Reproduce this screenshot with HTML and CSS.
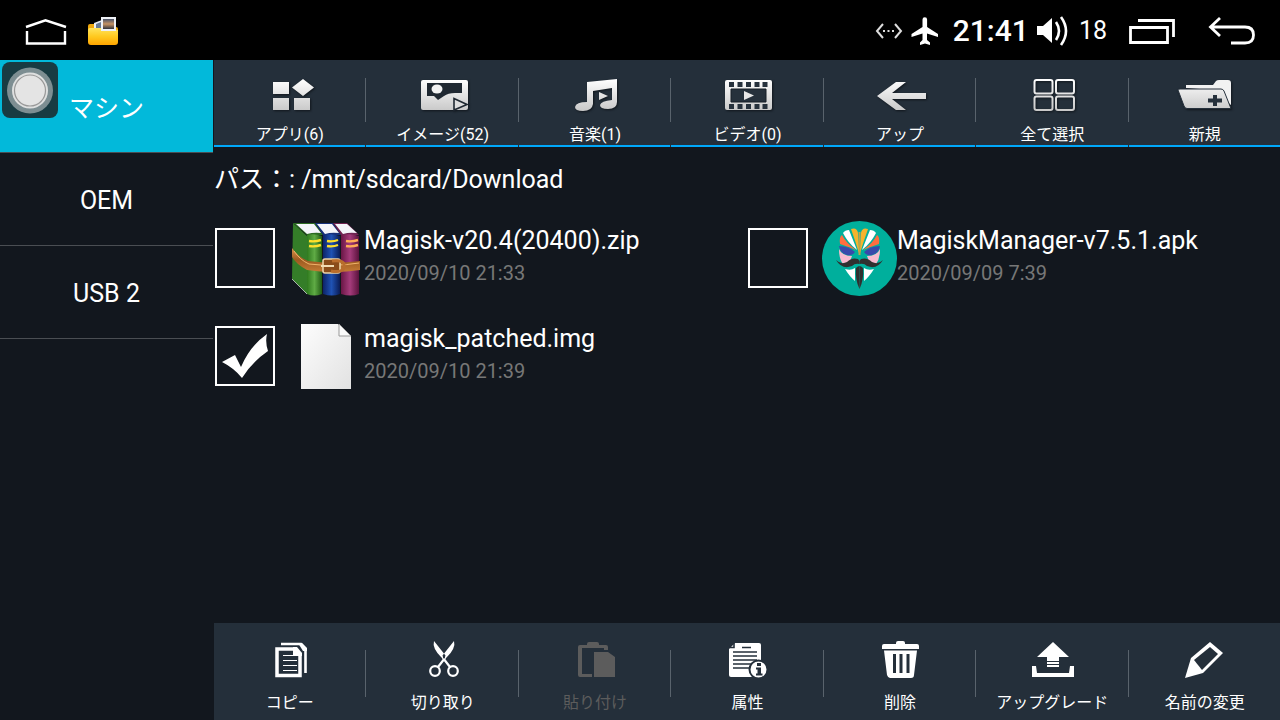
FILE: index.html
```html
<!DOCTYPE html>
<html lang="ja">
<head>
<meta charset="utf-8">
<meta name="viewport" content="width=device-width, initial-scale=1">
<title>ファイルマネージャー</title>
<link rel="stylesheet" href="styles.css">
</head>
<body>
<svg class="defs" aria-hidden="true">
  <defs>
    <linearGradient id="metal" gradientUnits="userSpaceOnUse" x1="0" y1="3" x2="0" y2="35"><stop offset="0" stop-color="#fff"/><stop offset="1" stop-color="#c8c8c8"/></linearGradient>
    <linearGradient id="folder" x1="0" y1="0" x2="0" y2="1"><stop offset="0" stop-color="#ffe45c"/><stop offset=".5" stop-color="#ffc91f"/><stop offset="1" stop-color="#ffa500"/></linearGradient>
    <linearGradient id="sunset" x1="0" y1="0" x2="0" y2="1"><stop offset="0" stop-color="#48536b"/><stop offset=".5" stop-color="#c79363"/><stop offset="1" stop-color="#30333d"/></linearGradient>
    <linearGradient id="green" x1="0" x2="1"><stop offset="0" stop-color="#2f7a1e"/><stop offset=".5" stop-color="#5fab45"/><stop offset="1" stop-color="#215c14"/></linearGradient>
    <linearGradient id="blue" x1="0" x2="1"><stop offset="0" stop-color="#0d2468"/><stop offset=".5" stop-color="#1f52b4"/><stop offset="1" stop-color="#0a1c55"/></linearGradient>
    <linearGradient id="plum" x1="0" x2="1"><stop offset="0" stop-color="#6a1645"/><stop offset=".5" stop-color="#a53c7b"/><stop offset="1" stop-color="#5a123c"/></linearGradient>
    <linearGradient id="belt" x1="0" y1="0" x2="0" y2="1"><stop offset="0" stop-color="#d9924a"/><stop offset=".5" stop-color="#9c5a20"/><stop offset="1" stop-color="#c47b35"/></linearGradient>
    <linearGradient id="paper" x1="0" y1="0" x2="1" y2="1"><stop offset="0" stop-color="#fdfdfd"/><stop offset="1" stop-color="#e2e2e2"/></linearGradient>
  </defs>
</svg>

<header class="status">
  <div class="status-left">
    <button class="plain" aria-label="ホーム">
      <svg width="42" height="28" viewBox="0 0 42 28" fill="none" stroke="#fff" stroke-width="2.4"><path d="M1 10 20.5 3.300 41 10M2 14V26.500H40V14"/></svg>
    </button>
    <button class="plain" aria-label="ファイル">
      <svg width="30" height="28" viewBox="0 0 30 28"><path d="M0 9q0-2 2-2h7l3 3h16q2 0 2 2v5H0z" fill="#f0a80c"/><path d="M6 6 14 3v9H6z" fill="#e9edf5"/><path d="M8 7l5-2v7H8z" fill="#667893"/><path d="M0 13q0-2 2-2h11l2 2h15v12q0 3-3 3H3q-3 0-3-3z" fill="url(#folder)"/><rect x="13" y="0" width="15" height="14" fill="#eef1f6"/><rect x="15" y="2" width="11" height="10" fill="url(#sunset)"/></svg>
    </button>
  </div>
  <div class="status-right">
    <svg width="28" height="28" viewBox="0 0 28 28" fill="none" stroke="#ddd" stroke-width="2"><path d="M8 7 2 14l6 7M20 7l6 7-6 7"/><path d="M8 14h13" stroke-dasharray="2 2.500"/></svg>
    <svg class="plane" width="28" height="28" viewBox="0 0 28 28" fill="#fff"><path d="M11.500 2.500a2.300 2.300 0 0 1 4.600 0V10L27 17v3l-11-3.500V23l3 2.500V28l-5-1.500L9 28v-2.500l2.500-2.500v-6.500L.5 20v-3l11-7z"/></svg>
    <time class="clock">21:41</time>
    <svg class="speaker" width="32" height="30" viewBox="0 0 32 30"><path d="M0 10h6l9-8v25l-9-8H0z" fill="#fff"/><path d="M19 6q6 9 0 18M24 1q10 14 0 28" fill="none" stroke="#fff" stroke-width="2.600"/></svg>
    <span class="volume">18</span>
    <button class="plain recents" aria-label="履歴">
      <svg width="46" height="26" viewBox="0 0 46 26" fill="none" stroke="#fff" stroke-width="2.800"><path d="M1.500 9.500H38.500V24.500H1.500zM9 2.500H44.500V19"/></svg>
    </button>
    <button class="plain" aria-label="戻る">
      <svg width="48" height="30" viewBox="0 0 48 30" fill="none" stroke="#fff" stroke-width="2.800"><path d="M12 2 2.500 11 12 20M3 11H37q8.500 0 8.500 8T37 27H23"/></svg>
    </button>
  </div>
</header>

<div class="app">
  <nav class="sidebar">
    <button class="place active">マシン</button>
    <button class="place">OEM</button>
    <button class="place">USB 2</button>
    <span class="assist"><svg width="56" height="56" viewBox="0 0 56 56"><circle cx="28" cy="28.500" r="23" fill="#7d8e92"/><circle cx="28" cy="28.500" r="18" fill="#dfe0e0"/><circle cx="28" cy="28.500" r="15.500" fill="#e4e4e4" stroke="#999" stroke-width="1.200"/></svg></span>
  </nav>

  <div class="content">
    <div class="bar bar-top">
      <button class="tile"><svg width="64" height="40" viewBox="0 0 64 40" fill="url(#metal)"><path d="M15 6h16v12H15zM15 22h16v12H15zM36 22h16v12H36zM45 3l11 8.500L45 20l-11-8.500z"/></svg><span>アプリ(6)</span></button>
      <button class="tile"><svg width="64" height="40" viewBox="0 0 64 40"><rect x="10" y="4" width="47" height="30" rx="2" fill="url(#metal)"/><path d="M16 7H51V17H44Q37 17 33 20L27 24 23 20H16z" fill="#1f2831"/><ellipse cx="26" cy="13" rx="5.500" ry="4.500" fill="#f2f2f2"/><path d="M43 22.500 56 28.500 43 34z" fill="#ddd" stroke="#1f2831" stroke-width="1.600"/></svg><span>イメージ(52)</span></button>
      <button class="tile"><svg width="64" height="40" viewBox="0 0 64 40" fill="url(#metal)"><path d="M24 6 54 3V26Q54 33 45 33 37 33 37 29 38 25 49 24V12L30 15V28Q29 35 20 35 12 35 12 31 13 26 24 26z"/><path d="M36 16l9 4-9 4z"/></svg><span>音楽(1)</span></button>
      <button class="tile"><svg width="64" height="40" viewBox="0 0 64 40"><rect x="10" y="4" width="47" height="30" rx="2" fill="url(#metal)"/><path d="M16 13H51V26H16z" fill="#26313c" stroke="#161e26"/><path d="M14 6h5v5h-5zM22.500 6h5v5h-5zM31 6h5v5h-5zM39.500 6h5v5h-5zM47.500 6h5v5h-5zM14 28h5v5h-5zM22.500 28h5v5h-5zM31 28h5v5h-5zM39.500 28h5v5h-5zM47.500 28h5v5h-5z" fill="#26313c"/><path d="M29 15l10 4.500L29 24z" fill="#e8e8e8"/></svg><span>ビデオ(0)</span></button>
      <button class="tile"><svg width="64" height="40" viewBox="0 0 64 40" fill="url(#metal)"><path d="M9 20 28 6H38L24 17H58V23H24L38 34H28z"/></svg><span>アップ</span></button>
      <button class="tile"><svg width="64" height="40" viewBox="0 0 64 40" fill="none" stroke="url(#metal)" stroke-width="2"><rect x="14.500" y="4" width="18" height="13.500" rx="2"/><rect x="36" y="4" width="18" height="13.500" rx="2"/><rect x="14.500" y="20.500" width="18" height="13.500" rx="2"/><rect x="36" y="20.500" width="18" height="13.500" rx="2"/></svg><span>全て選択</span></button>
      <button class="tile"><svg width="64" height="40" viewBox="0 0 64 40"><path d="M13 12V9H40L43 5Q44 4 46 4H55Q58 4 58 7V29L40 14z" fill="#f2f2f2"/><path d="M5 14Q5 13 7 13H48Q50 13 51 15L58 32.500H14Q12 32.500 11 30z" fill="url(#metal)" stroke="#26313c"/><path d="M40 19h4v3.500h5v4h-5V30h-4v-3.500h-5v-4h5z" fill="#26313c"/></svg><span>新規</span></button>
    </div>

    <main class="files">
      <p class="path">パス：: /mnt/sdcard/Download</p>
      <div class="grid">
        <label class="file">
          <input class="check" type="checkbox">
          <svg width="75" height="75" viewBox="0 0 75 75">
            <path d="M4 2 18 15V73L3 58z" fill="#347d28"/><path d="M4 2H26L34 14H18z" fill="#2c6a22"/><path d="M26 2H44L52 14H34z" fill="#16307a"/><path d="M44 2H58L70 14H52z" fill="#6f2350"/>
            <path d="M7 3H25L32 12Q25 11 18 13zM28 3H43L50 12Q42 11 36 13zM46 3H58L68 12Q60 11 54 13z" fill="#f4f5fa"/>
            <path d="M18 14Q25 12 33 15V73Q25 76 18 73z" fill="url(#green)"/><path d="M34 14Q43 12 51 15V73Q43 76 34 73z" fill="url(#blue)"/><path d="M52 14Q62 12 70 15V73Q62 76 52 73z" fill="url(#plum)"/>
            <path d="M20 20q6 1 12-1M20 25q6 1 12-1M38 20q6 1 11-1M38 25q6 1 11-1" fill="none" stroke="#ffdf2a" stroke-width="2.400"/><path d="M57 20q6 1 12-1M57 25q6 1 12-1" fill="none" stroke="#ffad55" stroke-width="2.400"/>
            <path d="M3 27Q9 36 19 40 45 43 71 40V49Q44 53 18 49 7 43 3 36z" fill="url(#belt)"/><path d="M5 30Q11 39 20 43 45 46 70 42" fill="none" stroke="#f0b36b" stroke-width="1"/>
            <rect x="34" y="38" width="17" height="14" rx="2" fill="#8a4c1a" stroke="#ecd2a5" stroke-width="1.600"/><path d="M32 45H45" stroke="#f1dcb4" stroke-width="2"/><path d="M43 40Q57 38 55 47 52 52 42 50" fill="none" stroke="#b96d2c" stroke-width="3"/>
            <path d="M3 58 18 73" stroke="#a9b3a9" stroke-width="1"/>
          </svg>
          <span class="meta"><span class="name">Magisk-v20.4(20400).zip</span><span class="date">2020/09/10 21:33</span></span>
        </label>
        <label class="file">
          <input class="check" type="checkbox">
          <svg width="75" height="75" viewBox="0 0 75 75">
            <circle cx="37.500" cy="37.500" r="37.500" fill="#00af9c"/>
            <g id="half">
              <path d="M29 8Q35 6 36 12L37.500 34Q34 22 29 8z" fill="#f6b32c"/>
              <path d="M21 12Q23 9 27 9L35 29Q26 22 21 12z" fill="#fff"/>
              <path d="M18 23Q17 16 20 14 24 22 34 29 27 26 18 23z" fill="#ff6e40"/>
              <path d="M17 28Q20 35 30 35 28 43 21 43 17 38 17 28z" fill="#f8bbd0"/>
              <path d="M17 25Q27 25 33 31 30 35 25 34 18 32 17 25z" fill="#3949ab"/>
              <path d="M23 48Q29 50 33 47V60Q28 56 23 48z" fill="#fff"/>
              <path d="M14 39Q19 44 25 41 30 36 36 38L37.500 40V43Q33 42 30 45 20 49 14 39z" fill="#303030"/>
              <path d="M34 47Q36 45 37.500 45V68Q33 59 34 47z" fill="#303030"/>
            </g>
            <use href="#half" transform="translate(75 0) scale(-1 1)"/>
            <path d="M36.500 11h2V34h-2z" fill="#bca34a"/>
          </svg>
          <span class="meta"><span class="name">MagiskManager-v7.5.1.apk</span><span class="date">2020/09/09 7:39</span></span>
        </label>
        <label class="file">
          <input class="check" type="checkbox" checked>
          <svg width="75" height="75" viewBox="0 0 75 75"><path d="M12 5H49L62 17V70H12z" fill="url(#paper)"/><path d="M50 5V17H62z" fill="#fafafa" stroke="#999" stroke-width="1"/></svg>
          <span class="meta"><span class="name">magisk_patched.img</span><span class="date">2020/09/10 21:39</span></span>
        </label>
      </div>
    </main>

    <div class="bar bar-bottom">
      <button class="tile"><svg width="64" height="40" viewBox="0 0 64 40" fill="none" stroke="#fff"><path d="M19 9H37L42 14V35.500H19z" stroke-width="3.500"/><path d="M35 7h4l5 6v3H35z" fill="#fff" stroke="none"/><path d="M23 4H43L47.500 9V33" stroke-width="2.600"/><path d="M40 3h4l5 5v3h-4z" fill="#fff" stroke="none"/><path d="M25 15.500H39M25 20.500H39M25 25.500H39M25 30.500H39"/></svg><span>コピー</span></button>
      <button class="tile"><svg width="64" height="40" viewBox="0 0 64 40" fill="none" stroke="#fff" stroke-width="2.200"><circle cx="24" cy="31" r="4.800"/><circle cx="42" cy="31" r="4.800"/><path d="M27 27 34 18M39 27 32 18"/><path d="M23 1 34.500 15.500 33 20 30 17Q21 8 23 1zM43 1 31.500 15.500 33 20 36 17Q45 8 43 1z" fill="#fff" stroke="none"/><circle cx="33" cy="17.500" r="1" fill="#242f3a" stroke="none"/></svg><span>切り取り</span></button>
      <button class="tile" disabled><svg width="64" height="40" viewBox="0 0 64 40" fill="#5c5c5c"><path d="M29 37H17Q15 37 15 35V7Q15 5 17 5H24V4Q24 2 26 2H34Q36 2 36 4V5H43Q45 5 45 7V10H41V8H19V34H29zM31 12H45L52 17V37H31z"/></svg><span>貼り付け</span></button>
      <button class="tile"><svg width="64" height="40" viewBox="0 0 64 40"><path d="M20 3H44Q46 3 46 5V37H16Q14 37 14 35V9z" fill="#fff"/><path d="M14 7.500H19V3M27 7.500H36M18 12H42M18 16H42M18 20H42M18 24H36M18 28H34" fill="none" stroke="#242f3a" stroke-width="1.600"/><circle cx="43.500" cy="29.500" r="9" fill="#fff" stroke="#242f3a" stroke-width="2"/><path d="M42 23h4v3h-4zM41 27.500h5v6h1.500v2H41v-2h1.500v-4H41z" fill="#242f3a"/></svg><span>属性</span></button>
      <button class="tile"><svg width="64" height="40" viewBox="0 0 64 40"><path d="M14 9V6Q14 4 16 4H28V3Q28 1 30 1H35Q37 1 37 3V4H49Q51 4 51 6V9zM16 10.500H49L46 35Q46 38 43 38H22Q20 38 19 35z" fill="#fff"/><path d="M25 14h3v19h-3zM31.500 14h3v19h-3zM38.500 14h3v19h-3z" fill="#242f3a"/></svg><span>削除</span></button>
      <button class="tile"><svg width="64" height="40" viewBox="0 0 64 40" fill="#fff"><path d="M33 2 49 17H39V21H27V17H17zM27 22h12v2H27zM27 25h12v2H27zM12 26h4l1 7H49l1-7h4V37H12z"/></svg><span>アップグレード</span></button>
      <button class="tile"><svg width="64" height="40" viewBox="0 0 64 40"><path d="M12 38 18 18 37 2 50 13 30 33z" fill="#fff"/><path d="M21 20 37 7 45 14 29 30z" fill="#242f3a"/></svg><span>名前の変更</span></button>
    </div>
  </div>
</div>
</body>
</html>
```
FILE: styles.css
```css
* { box-sizing: border-box; }

body {
  margin: 0;
  min-height: 100vh;
  display: flex;
  flex-direction: column;
  background: #12171e;
  color: #fff;
  font-family: Roboto, "Noto Sans CJK JP", sans-serif;
}

svg { display: block; flex: none; }

.defs { position: absolute; width: 0; height: 0; }

button {
  margin: 0;
  padding: 0;
  border: 0;
  background: none;
  color: inherit;
  font: inherit;
}

.status {
  display: flex;
  justify-content: space-between;
  align-items: center;
  height: 60px;
  padding: 1px 24px 0;
  background: #000;
}

.status-left,
.status-right { display: flex; align-items: center; }

.status-left { gap: 21px; padding-left: 1px; }

.plane { margin-left: 8px; }

.clock {
  margin-left: 14px;
  font-size: 30px;
  font-weight: 500;
}

.speaker { margin-left: 8px; }

.volume { margin-left: 10px; font-size: 25px; }

.recents { margin: 0 33px 0 22px; }

.app { flex: 1; display: flex; gap: 1px; }

.sidebar {
  position: relative;
  flex: none;
  width: 213px;
}

.place {
  display: block;
  width: 100%;
  height: 93px;
  padding-top: 2px;
  border-bottom: 1px solid #4a4e53;
  font-size: 25px;
}

.place.active { padding-top: 0; background: #02b9da; }

.assist {
  position: absolute;
  top: 2px;
  left: 2px;
  border-radius: 8px;
  background: #183b42;
}

.content {
  flex: 1;
  min-width: 0;
  display: flex;
  flex-direction: column;
}

.bar {
  display: grid;
  grid-template-columns: repeat(7, 1fr);
  column-gap: 1px;
  background: #242f3a;
}

.tile {
  position: relative;
  display: flex;
  flex-direction: column;
  align-items: center;
  font-size: 16px;
  line-height: 20px;
  white-space: nowrap;
}

.tile:not(:first-child) { padding-left: 1px; }

.tile:not(:last-child)::after {
  content: "";
  position: absolute;
  right: -1px;
  width: 1px;
  background: #59636c;
}

.tile:disabled { color: #5c5c5c; }

.bar-top .tile {
  gap: 9px;
  padding-top: 16px;
  border-bottom: 2px solid #00a8fa;
}

.bar-top .tile::after { top: 18px; height: 44px; }

.bar-top svg { filter: drop-shadow(1px 1px 1px #10161c); }

.bar-bottom .tile {
  gap: 13px;
  padding-top: 17px;
  padding-bottom: 7px;
}

.bar-bottom .tile::after { top: 27px; height: 47px; }

.files { flex: 1; }

.path {
  margin: 0;
  padding: 17px 0 13px;
  font-size: 25px;
  line-height: 32px;
}

.grid {
  display: grid;
  grid-template-columns: repeat(2, 1fr);
  grid-auto-rows: 98px;
}

.file { display: flex; align-items: center; padding-left: 1px; }

.check {
  appearance: none;
  flex: none;
  width: 60px;
  height: 60px;
  margin: 0 14px 0 0;
  border: 2px solid #fff;
}

.check:checked::before {
  content: "";
  display: block;
  width: 56px;
  height: 56px;
  background: #fff;
  clip-path: path("M5 34 18 27 24 39Q33 18 50 6Q48 14 51 23Q35 34 25 50Q17 40 5 34z");
}

.meta { display: flex; flex-direction: column; padding-bottom: 4px; }

.name { font-size: 25px; line-height: 34px; }

.date { color: #777; font-size: 20px; line-height: 30px; }
```
